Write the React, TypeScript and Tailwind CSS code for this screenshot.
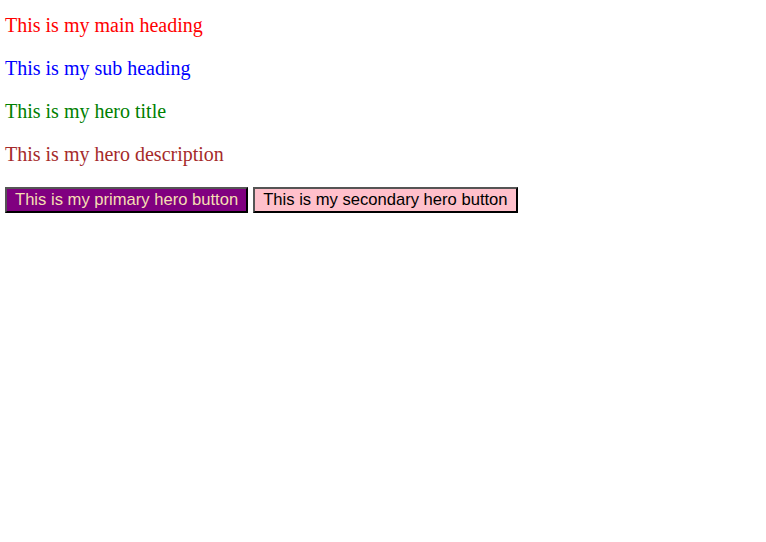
import React from "react";

export default function App() {
  const serif = { fontFamily: '"Liberation Serif", "Times New Roman", serif' };
  return (
    <div className="min-h-screen bg-white pl-[5px] pt-[14px]">
      <div className="flex flex-col gap-5 text-[20px] leading-[23px]" style={serif}>
        <p className="text-[#ff0000]">This is my main heading</p>
        <p className="text-[#0000ff]">This is my sub heading</p>
        <p className="text-[#008000]">This is my hero title</p>
        <p className="text-[#a52a2a]">This is my hero description</p>
      </div>
      <div className="mt-[21px] flex gap-[5px] font-['Liberation_Sans',Arial,sans-serif] text-[16.6px] leading-[18px]">
        <button className="border-2 border-t-[#555] border-l-[#555] border-b-black border-r-black bg-[#800080] px-[8px] py-[2px] text-[#f5deb3]">
          This is my primary hero button
        </button>
        <button className="border-2 border-t-[#555] border-l-[#555] border-b-black border-r-black bg-[#ffc0cb] px-[8px] py-[2px] text-black">
          This is my secondary hero button
        </button>
      </div>
    </div>
  );
}
